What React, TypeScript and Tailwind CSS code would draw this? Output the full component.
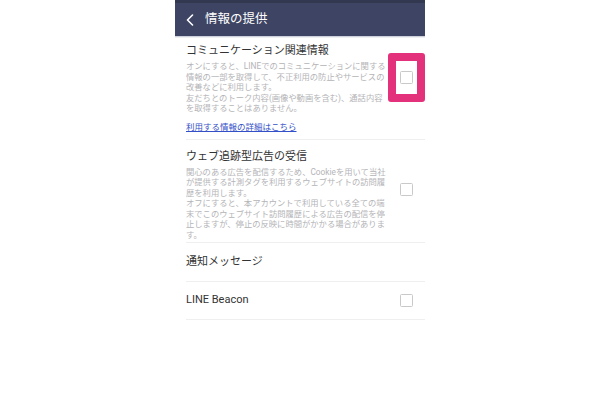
import React from "react";

const Checkbox = () => (
  <div className="w-[13px] h-[13px] border-[1.5px] border-[#c9c9cc] rounded-[1.5px] bg-white" />
);

const desc1 = [
  "オンにすると、LINEでのコミュニケーションに関する",
  "情報の一部を取得して、不正利用の防止やサービスの",
  "改善などに利用します。",
  "友だちとのトーク内容(画像や動画を含む)、通話内容",
  "を取得することはありません。",
];

const desc2 = [
  "関心のある広告を配信するため、Cookieを用いて当社",
  "が提供する計測タグを利用するウェブサイトの訪問履",
  "歴を利用します。",
  "オフにすると、本アカウントで利用している全ての端",
  "末でこのウェブサイト訪問履歴による広告の配信を停",
  "止しますが、停止の反映に時間がかかる場合がありま",
  "す。",
];

export default function App() {
  return (
    <div className="w-[600px] h-[400px] bg-white flex justify-center font-['Roboto','Noto_Sans_CJK_JP',sans-serif]">
      <div className="w-[250px] flex flex-col">
        {/* Header */}
        <div className="h-[36px] bg-[#3e4564] border-t-[3px] border-[#323850] flex items-center">
          <svg width="8" height="12" viewBox="0 0 8 12" className="ml-[11px]">
            <path d="M6.5 1 L1.5 6 L6.5 11" fill="none" stroke="#ffffff" strokeWidth="1.6" strokeLinecap="round" strokeLinejoin="round" />
          </svg>
          <span className="ml-[11px] text-white text-[12.5px] leading-none">情報の提供</span>
        </div>
        <div className="h-[1px] bg-[#cfd1da]" />
        <div className="h-[1px] bg-[#eef0f4]" />

        {/* Section 1 */}
        <div className="ml-[11px] flex border-b border-[#efefef]">
          <div className="flex-1 pt-[6px] pb-[6px]">
            <div className="text-[11px] leading-[14px] text-[#333333]">コミュニケーション関連情報</div>
            <div className="mt-[3px] text-[8.3px] leading-[10.5px] text-[#b4b4b7]">
              {desc1.map((l) => (
                <div key={l} className="whitespace-nowrap">{l}</div>
              ))}
            </div>
            <div className="mt-[8px] text-[8.5px] leading-[11px] text-[#3450c8] underline whitespace-nowrap">
              利用する情報の詳細はこちら
            </div>
          </div>
          <div className="self-start mt-[15px] w-[37px] h-[49px] border-[8px] border-[#e3317b] rounded-[3px] flex items-center justify-center bg-white">
            <Checkbox />
          </div>
        </div>

        {/* Section 2 */}
        <div className="ml-[11px] flex border-b border-[#efefef]">
          <div className="flex-1 pt-[10px] pb-[2px]">
            <div className="text-[11px] leading-[14px] text-[#333333]">ウェブ追跡型広告の受信</div>
            <div className="mt-[3px] text-[8.3px] leading-[10.5px] text-[#b4b4b7]">
              {desc2.map((l) => (
                <div key={l} className="whitespace-nowrap">{l}</div>
              ))}
            </div>
          </div>
          <div className="self-start mt-[43px] w-[37px] flex justify-center">
            <Checkbox />
          </div>
        </div>

        {/* Row: 通知メッセージ */}
        <div className="ml-[11px] h-[39px] flex items-center border-b border-[#efefef]">
          <span className="text-[11px] text-[#333333]">通知メッセージ</span>
        </div>

        {/* Row: LINE Beacon */}
        <div className="ml-[11px] h-[38px] flex items-center border-b border-[#efefef]">
          <span className="flex-1 text-[11px] text-[#333333]">LINE Beacon</span>
          <div className="w-[37px] flex justify-center">
            <Checkbox />
          </div>
        </div>
      </div>
    </div>
  );
}
